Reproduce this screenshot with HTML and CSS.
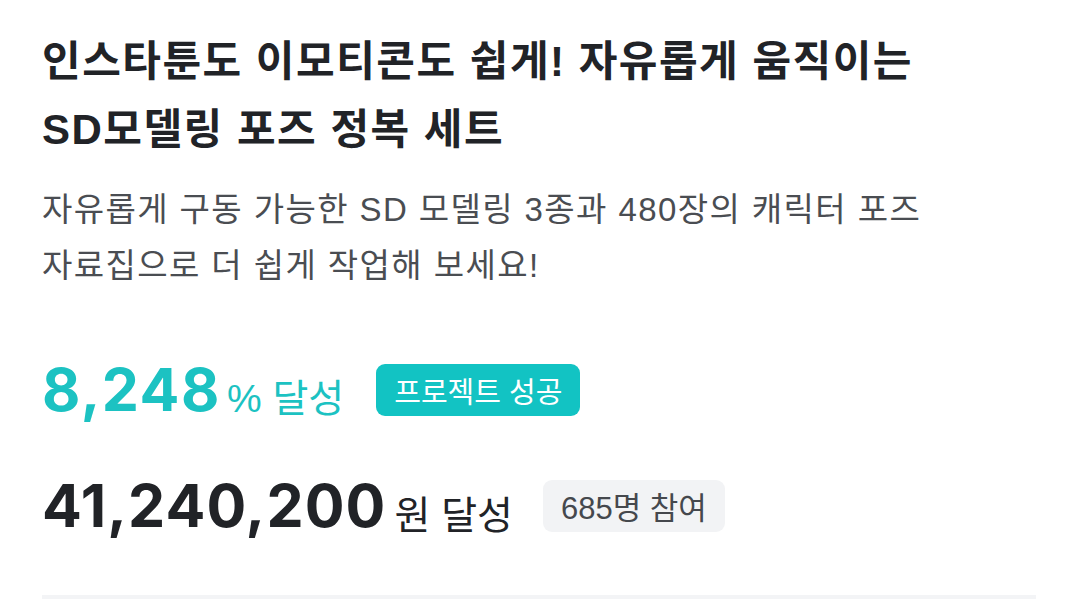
FILE: index.html
```html
<!DOCTYPE html>
<html lang="ko">
<head>
<meta charset="utf-8">
<link rel="stylesheet" href="styles.css">
</head>
<body>
<div class="page">
  <h1 class="title">인스타툰도 이모티콘도 쉽게! 자유롭게 움직이는<br>SD모델링 포즈 정복 세트</h1>
  <p class="desc">자유롭게 구동 가능한 SD 모델링 3종과 480장의 캐릭터 포즈<br>자료집으로 더 쉽게 작업해 보세요!</p>
  <div class="row rate">
    <span class="rate-num">8,248</span><span class="rate-unit">% 달성</span>
    <span class="badge badge-teal">프로젝트 성공</span>
  </div>
  <div class="row amount">
    <span class="amount-num">41,240,200</span><span class="amount-unit">원 달성</span>
    <span class="badge badge-grey">685명 참여</span>
  </div>
  <div class="divider"></div>
</div>
</body>
</html>
```

FILE: styles.css
```css
html, body {
  margin: 0;
  padding: 0;
  background: #fff;
}
body {
  font-family: "Liberation Sans", "Noto Sans CJK KR", sans-serif;
  color: #212327;
}
.page {
  padding: 28px 44px 0 42px;
}
.title {
  margin: 0;
  font-size: 42px;
  font-weight: 700;
  line-height: 68px;
  letter-spacing: 1.5px;
  color: #212327;
}
.desc {
  margin: 18px 0 0;
  font-size: 33px;
  line-height: 56px;
  letter-spacing: 1.4px;
  color: #4a4d52;
  font-weight: 400;
}
.row {
  display: flex;
  align-items: center;
}
.rate {
  margin-top: 60px;
}
.rate-num {
  font-family: Inter, "Liberation Sans", sans-serif;
  font-size: 59px;
  font-weight: 700;
  color: #1cc2c2;
  letter-spacing: 1.5px;
}
.rate-unit {
  font-size: 39px;
  color: #1cc2c2;
  margin-left: 6px;
  margin-top: 10px;
}
.badge {
  border-radius: 9px;
  padding: 0 18px;
  height: 52px;
  display: inline-flex;
  align-items: center;
}
.badge-teal {
  font-size: 29px;
  font-weight: 400;
  background: #12c3c3;
  color: #fff;
  margin-left: 32px;
}
.amount {
  margin-top: 45px;
}
.amount-num {
  font-family: Inter, "Liberation Sans", sans-serif;
  font-size: 59px;
  font-weight: 700;
  color: #212327;
  letter-spacing: 1.1px;
}
.amount-unit {
  font-size: 39px;
  color: #212327;
  margin-left: 8px;
  margin-top: 12px;
}
.badge-grey {
  font-size: 31px;
  background: #f2f3f5;
  color: #45484d;
  margin-left: 30px;
}
.divider {
  margin-top: 54px;
  height: 4px;
  background: #f3f4f6;
}
```
